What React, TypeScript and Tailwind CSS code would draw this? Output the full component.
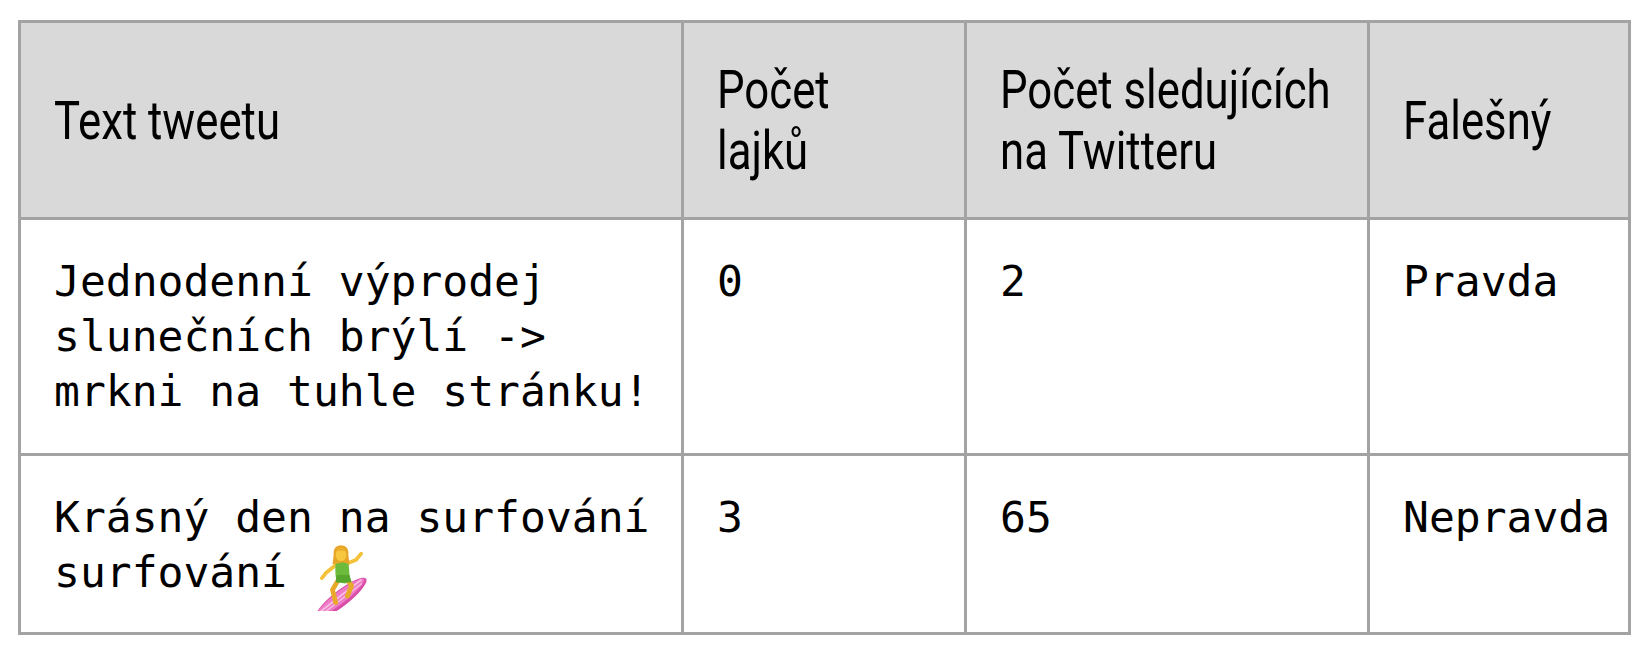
import React from "react";

function Surfer() {
  return (
    <svg width="68" height="68" viewBox="0 0 64 64" className="inline-block align-baseline -mt-[24px] -mb-[24px] -ml-[6px]">
      <g transform="rotate(-38 32 52)">
        <ellipse cx="32" cy="52" rx="30" ry="7.5" fill="#d94fa8" />
        <ellipse cx="32" cy="51" rx="28" ry="5.5" fill="#ef7cc6" />
        <path d="M6 50 L58 50" stroke="#f8c2e6" strokeWidth="1.6" />
        <path d="M8 53 L56 53" stroke="#f8c2e6" strokeWidth="1.2" />
      </g>
      <path d="M30 34 L24 44 L27 56" stroke="#e9a92a" strokeWidth="4.5" fill="none" strokeLinecap="round" strokeLinejoin="round" />
      <path d="M36 33 L42 40 L38 50" stroke="#e9a92a" strokeWidth="4.5" fill="none" strokeLinecap="round" strokeLinejoin="round" />
      <path d="M28 20 L18 28 L14 33" stroke="#f3c23a" strokeWidth="3.5" fill="none" strokeLinecap="round" strokeLinejoin="round" />
      <path d="M38 19 L46 16 L51 10" stroke="#f3c23a" strokeWidth="3.5" fill="none" strokeLinecap="round" strokeLinejoin="round" />
      <path d="M27 17 Q33 14 39 17 L40 30 Q42 36 36 38 L28 37 Q26 30 27 17 Z" fill="#6dbb3c" />
      <path d="M28 30 L40 30 L42 37 L27 37 Z" fill="#58a52e" />
      <path d="M25 12 Q24 2 32 2 Q40 2 39 12 L40 20 L34 18 L30 19 L24 20 Z" fill="#e8a628" />
      <ellipse cx="32" cy="11" rx="5" ry="6" fill="#f7c83f" />
      <path d="M27 8 Q32 3 37 8 Q33 6 27 8 Z" fill="#e8a628" />
    </svg>
  );
}

function H({ children }: { children: React.ReactNode }) {
  return (
    <span className="inline-block origin-left scale-x-[0.81] whitespace-nowrap">{children}</span>
  );
}

export default function App() {
  const th = "border-[3px] border-[#a3a3a3] bg-[#d9d9d9] pl-[33px] pr-[35px] py-[34px] text-left align-middle font-normal text-black text-[54px] leading-[61px] font-['Roboto',sans-serif]";
  const td = "border-[3px] border-[#a3a3a3] bg-white pl-[33px] pr-[35px] pt-[34px] pb-[30px] align-top text-black text-[43px] leading-[55px] whitespace-nowrap font-['DejaVu_Sans_Mono','Liberation_Mono',monospace]";
  return (
    <div className="w-[1642px] h-[656px] bg-white pt-[20px] pl-[18px]">
      <table className="border-collapse table-fixed w-[1610px]">
        <colgroup>
          <col className="w-[663px]" />
          <col className="w-[283px]" />
          <col className="w-[403px]" />
          <col className="w-[261px]" />
        </colgroup>
        <thead>
          <tr className="h-[197px]">
            <th className={th}><H>Text tweetu</H></th>
            <th className={th}><H>Počet<br />lajků</H></th>
            <th className={th}><H>Počet sledujících<br />na Twitteru</H></th>
            <th className={th}><H>Falešný</H></th>
          </tr>
        </thead>
        <tbody>
          <tr className="h-[236px]">
            <td className={td}>Jednodenní výprodej<br />slunečních brýlí -&gt;<br />mrkni na tuhle stránku!</td>
            <td className={td}>0</td>
            <td className={td}>2</td>
            <td className={td}>Pravda</td>
          </tr>
          <tr className="h-[179px]">
            <td className={td}>Krásný den na surfování<br />surfování <Surfer /></td>
            <td className={td}>3</td>
            <td className={td}>65</td>
            <td className={td}>Nepravda</td>
          </tr>
        </tbody>
      </table>
    </div>
  );
}
